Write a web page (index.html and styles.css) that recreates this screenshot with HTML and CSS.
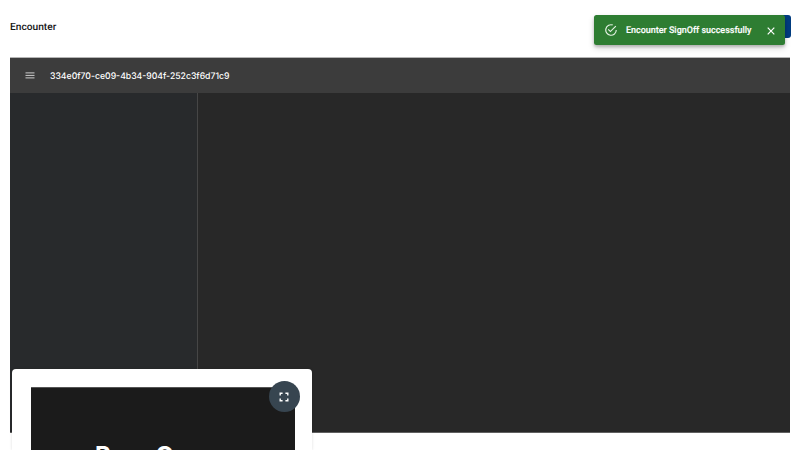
FILE: index.html
```html
<!DOCTYPE html>
<html lang="en">
<head>
<meta charset="utf-8">
<title>Encounter</title>
<link rel="stylesheet" href="styles.css">
</head>
<body>
<header class="topbar">
  <h1 class="title"><svg class="fit" width="47" height="14"><text x="0" y="10" textLength="46.3" lengthAdjust="spacingAndGlyphs">Encounter</text></svg></h1>
  <button class="action" aria-label="Sign off"></button>
</header>
<main class="viewer">
  <div class="toolbar">
    <svg class="menu" width="10" height="8" viewBox="0 0 10 8"><path d="M.5.9h9M.5 3.400h9M.5 5.900h9" stroke="#ddd" stroke-width=".9"/></svg>
    <svg class="fit doc" width="182" height="14"><text x="0" y="9.7" textLength="179.5" lengthAdjust="spacingAndGlyphs">334e0f70-ce09-4b34-904f-252c3f6d71c9</text></svg>
  </div>
  <div class="panes">
    <aside class="side"></aside>
    <section class="page"></section>
  </div>
</main>
<div class="call">
  <div class="video"><span>Rose</span><span>C</span></div>
  <button class="expand" aria-label="Full screen">
    <svg width="10" height="10" viewBox="0 0 10 10"><path d="M1.2 3.6V1.2h2.4M6.4 1.2h2.4v2.4M8.8 6.4v2.4H6.4M3.6 8.8H1.2V6.4" fill="none" stroke="#fff" stroke-width="1.4"/></svg>
  </button>
</div>
<div class="toast">
  <svg class="check" width="14" height="14" viewBox="0 0 24 24"><path fill="#e4f2e4" d="M20 12a8 8 0 1 1-5.800-7.690l1.570-1.570A10 10 0 1 0 22 12M7.910 10.080 6.500 11.500 11 16 21 6l-1.410-1.420L11 13.170z"/></svg>
  <svg class="fit message" width="127" height="14"><text x="0" y="10" textLength="125.500" lengthAdjust="spacingAndGlyphs">Encounter SignOff successfully</text></svg>
  <svg class="close" width="8" height="8" viewBox="0 0 8 8"><path d="M.7.7l6.600 6.600M7.300.7.7 7.300" stroke="#fff" stroke-width="1.200"/></svg>
</div>
</body>
</html>
```
FILE: styles.css
```css
* { box-sizing: border-box; }
html, body { height: 100%; }
body { margin: 0; overflow: hidden; background: #fff; font-family: Roboto, sans-serif; position: relative; }
button { border: 0; padding: 0; }
svg { display: block; flex: none; }
.fit { overflow: visible; text-rendering: geometricPrecision; }
.topbar { height: 57px; padding: 15px 9px 0 10px; display: flex; justify-content: space-between; }
.title { margin: 5px 0 0; font-size: 10px; font-weight: 500; }
.title text { fill: #161616; }
.action { width: 66px; height: 23px; border-radius: 3px; background: #003c80; }
.viewer { margin: 0 10px; height: 376px; display: flex; flex-direction: column; border-top: 1px solid #b5b5b5; }
.toolbar { height: 35px; background: #3c3c3c; display: flex; align-items: center; padding-left: 15px; }
.doc { margin-left: 15px; font: 500 9px Inter, sans-serif; }
.doc text { fill: #fff; }
.panes { flex: 1; display: flex; background: #282828; border-bottom: 1px solid #606060; }
.side { width: 188px; background: #282a2c; border-right: 1px solid #464646; }
.page { flex: 1; }
.call { position: absolute; left: 12.400px; top: 369px; width: 300px; height: 81px; padding: 18.400px 17.400px 0 18.600px; background: #fff; border-radius: 4px 4px 0 0; box-shadow: 0 0 3px rgba(0,0,0,.14); }
.video { height: 63px; background: #1b1b1b; color: #fff; font: 700 24px/28px Inter, sans-serif; padding: 54px 0 0 64px; overflow: hidden; display: flex; border-top: 1px solid #555; }
.video span:first-child { width: 60.500px; }
.expand { position: absolute; left: 256.600px; top: 12px; width: 31px; height: 31px; border-radius: 50%; background: #374550; display: grid; place-items: center; }
.toast { position: absolute; left: 594px; top: 15px; width: 191px; height: 30px; background: #2e7d32; border-radius: 2.500px; display: flex; align-items: center; padding-left: 10px; box-shadow: 0 2px 3px rgba(0,0,0,.2), 0 3px 6px rgba(0,0,0,.16); }
.message { margin-left: 7.500px; font-size: 9.300px; font-weight: 500; }
.message text { fill: #fff; stroke: #fff; stroke-width: .15px; }
.close { margin: 1px 0 0 14px; }
```
